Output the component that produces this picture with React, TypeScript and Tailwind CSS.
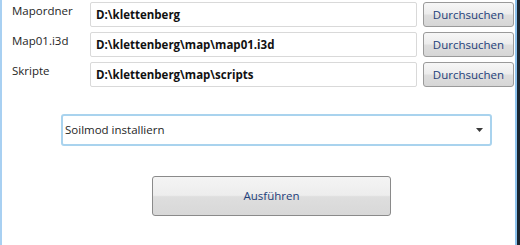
import React from "react";

const font = { fontFamily: '"Open Sans", "Noto Sans", sans-serif' };

function Row({ label, value }: { label: string; value: string }) {
  return (
    <div className="flex h-[25px] items-stretch">
      <div className="w-[88px] pl-[10px] pt-[1px] text-[11.5px] leading-[16px] text-[#1e1e1e]">
        {label}
      </div>
      <div className="w-[327px] rounded-[2px] border border-[#d9d9d9] bg-white pl-[5px] text-[11.5px] font-bold leading-[23px] text-[#111]">
        {value}
      </div>
      <div className="ml-[6px] w-[91px] rounded-[3px] border border-[#9a9a9a] bg-[linear-gradient(#f7f7f7_0%,#ececec_48%,#dedede_52%,#d6d6d6_100%)] text-center text-[11.5px] leading-[23px] text-[#23407a]">
        Durchsuchen
      </div>
    </div>
  );
}

export default function App() {
  return (
    <div className="flex h-[245px] w-[520px] bg-white" style={font}>
      <div className="w-[2px] bg-[#a8d0f2]" />
      <div className="flex flex-1 flex-col pt-[2px]">
        <div className="flex flex-col gap-[5px]">
          <Row label="Mapordner" value="D:\klettenberg" />
          <Row label="Map01.i3d" value="D:\klettenberg\map\map01.i3d" />
          <Row label="Skripte" value="D:\klettenberg\map\scripts" />
        </div>
        <div className="ml-[59px] mt-[27px] flex h-[32px] w-[431px] items-center justify-between rounded-[3px] border-2 border-[#a9d3ee] bg-white pl-[2px] pr-[7px]">
          <span className="text-[11.5px] text-[#1e1e1e]">Soilmod installiern</span>
          <svg width="7" height="4" viewBox="0 0 7 4">
            <path d="M0 0 L7 0 L3.5 4 Z" fill="#3a3a3a" />
          </svg>
        </div>
        <div className="ml-[150px] mt-[30px] flex h-[40px] w-[239px] items-center justify-center rounded-[3px] border border-[#8a8a8a] bg-[linear-gradient(#f4f4f4_0%,#ededed_48%,#dedede_52%,#d8d8d8_100%)] text-[11.5px] text-[#23407a]">
          Ausführen
        </div>
      </div>
      <div className="w-[2px] bg-[#8cc2ee]" />
      <div className="w-[3px] bg-[#1b2631]" />
    </div>
  );
}
